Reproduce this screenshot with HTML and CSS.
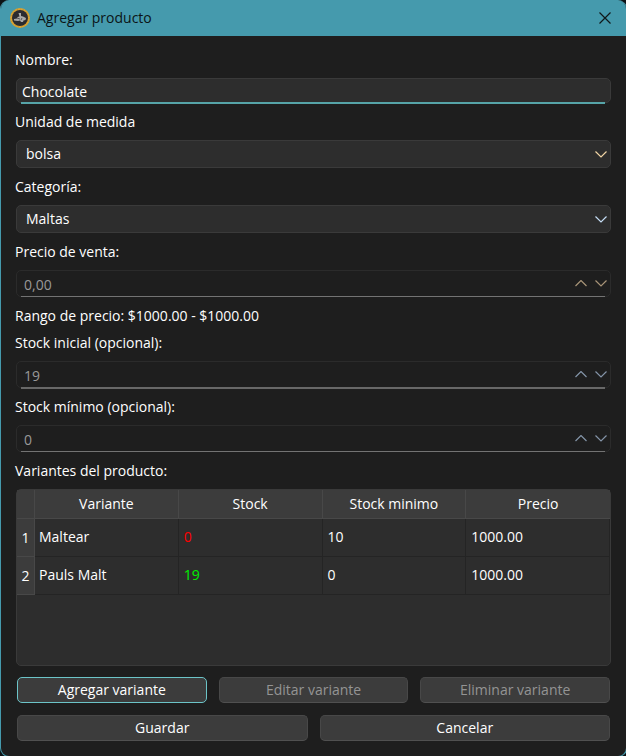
FILE: index.html
```html
<!DOCTYPE html>
<html lang="es">
<head>
<meta charset="utf-8">
<title>Agregar producto</title>
<link rel="stylesheet" href="styles.css">
</head>
<body>
<main class="window">
  <header class="titlebar">
    <svg class="logo" width="22" height="22" viewBox="0 0 22 22" aria-hidden="true">
      <circle cx="11" cy="11" r="10" fill="#dda52f"/>
      <circle cx="11" cy="11" r="9" fill="none" stroke="#b98a3a" stroke-width="1" stroke-dasharray="1 2"/>
      <circle cx="11" cy="11" r="8" fill="#2b2b30"/>
      <path d="M9.500 6h2.500v3l2 .5 3 1.500-.5 2-2 .5-.5 1.500h-2l-1-1.500-2 .5-4-.5v-1.500l3-.5.5-1.500 2-.5z" fill="#aaa9a6"/>
      <path d="M8 11l3 1M13 11l-1 2" stroke="#55555a" stroke-width="1"/>
    </svg>
    <h1 class="title">Agregar producto</h1>
    <button class="close" type="button" aria-label="Cerrar">
      <svg width="12" height="12" viewBox="0 0 12 12"><path d="M.5 .5l11 11M11.500 .5l-11 11" fill="none" stroke="#10181a" stroke-width="1.200"/></svg>
    </button>
  </header>
  <form class="form">
    <label class="label" for="nombre">Nombre:</label>
    <div class="field text focused"><input id="nombre" type="text" value="Chocolate"></div>

    <label class="label" for="unidad">Unidad de medida</label>
    <div class="field combo warm">
      <select id="unidad"><option>bolsa</option></select>
      <svg class="chevron" width="12" height="7" viewBox="0 0 12 7"><path d="M.5 .5L6 6 11.500 .5"/></svg>
    </div>

    <label class="label" for="categoria">Categoría:</label>
    <div class="field combo cool">
      <select id="categoria"><option>Maltas</option></select>
      <svg class="chevron" width="12" height="7" viewBox="0 0 12 7"><path d="M.5 .5L6 6 11.500 .5"/></svg>
    </div>

    <label class="label" for="precio">Precio de venta:</label>
    <div class="field spin warm">
      <input id="precio" type="text" value="0,00" disabled>
      <button class="step" type="button" aria-label="Aumentar" disabled><svg width="12" height="7" viewBox="0 0 12 7"><path d="M.5 6L6 .5 11.500 6"/></svg></button>
      <button class="step" type="button" aria-label="Disminuir" disabled><svg width="12" height="7" viewBox="0 0 12 7"><path d="M.5 .5L6 6 11.500 .5"/></svg></button>
    </div>

    <div class="stack">
      <p class="label">Rango de precio: $1000.00 - $1000.00</p>
      <label class="label" for="stock">Stock inicial (opcional):</label>
    </div>
    <div class="field spin strong cool">
      <input id="stock" type="text" value="19" disabled>
      <button class="step" type="button" aria-label="Aumentar" disabled><svg width="12" height="7" viewBox="0 0 12 7"><path d="M.5 6L6 .5 11.500 6"/></svg></button>
      <button class="step" type="button" aria-label="Disminuir" disabled><svg width="12" height="7" viewBox="0 0 12 7"><path d="M.5 .5L6 6 11.500 .5"/></svg></button>
    </div>

    <label class="label" for="minimo">Stock mínimo (opcional):</label>
    <div class="field spin cool">
      <input id="minimo" type="text" value="0" disabled>
      <button class="step" type="button" aria-label="Aumentar" disabled><svg width="12" height="7" viewBox="0 0 12 7"><path d="M.5 6L6 .5 11.500 6"/></svg></button>
      <button class="step" type="button" aria-label="Disminuir" disabled><svg width="12" height="7" viewBox="0 0 12 7"><path d="M.5 .5L6 6 11.500 .5"/></svg></button>
    </div>

    <p class="label" id="variantes">Variantes del producto:</p>
    <div class="grid">
      <table aria-labelledby="variantes">
        <colgroup><col class="index"><col><col><col><col></colgroup>
        <thead>
          <tr><td class="corner"></td><th scope="col">Variante</th><th scope="col">Stock</th><th scope="col">Stock minimo</th><th scope="col">Precio</th></tr>
        </thead>
        <tbody>
          <tr><th scope="row">1</th><td>Maltear</td><td class="empty">0</td><td>10</td><td>1000.00</td></tr>
          <tr><th scope="row">2</th><td>Pauls Malt</td><td class="available">19</td><td>0</td><td>1000.00</td></tr>
        </tbody>
      </table>
    </div>

    <div class="actions">
      <div class="row">
        <button class="btn primary" type="button">Agregar variante</button>
        <button class="btn" type="button" disabled>Editar variante</button>
        <button class="btn" type="button" disabled>Eliminar variante</button>
      </div>
      <div class="row">
        <button class="btn" type="submit">Guardar</button>
        <button class="btn" type="button">Cancelar</button>
      </div>
    </div>
  </form>
</main>
</body>
</html>
```
FILE: styles.css
```css
* { box-sizing: border-box; }

html, body { height: 100%; }

body {
  margin: 0;
  overflow: hidden;
  background: #0d1214;
  color: #fff;
  font: 14px/20px "Open Sans", "Noto Sans", sans-serif;
}

input, select, button { font: inherit; color: inherit; }

/* The right and bottom frame edges run just past the viewport. */
.window {
  display: flex;
  flex-direction: column;
  width: calc(100% + 1px);
  min-height: calc(100% + 1px);
  border: 1px solid #459aad;
  border-top: 0;
  border-radius: 9px;
  background: #1e1e1e;
  overflow: hidden;
}

.titlebar {
  display: flex;
  align-items: center;
  gap: 6px;
  height: 36px;
  padding: 0 15px 0 8px;
  background: #459aad;
  color: #0b1416;
}

.title { flex: 1; margin: 0; font-size: 14px; font-weight: 400; }

.close { display: flex; padding: 0; border: 0; background: none; }

.form {
  flex: 1;
  display: flex;
  flex-direction: column;
  gap: 7px;
  padding: 12px 15px 15px;
}

.label { margin: 0 -1px; line-height: 23px; }

.stack { display: flex; flex-direction: column; gap: 4px; }

.field {
  position: relative;
  display: flex;
  align-items: center;
  height: 27px;
  border: 1px solid #3a3a3a;
  border-radius: 5px;
  background: #2d2d2d;
}

.field input {
  flex: 1;
  min-width: 0;
  height: 100%;
  padding: 1px 7px 0;
  border: 0;
  outline: 0;
  background: none;
}

.text { height: 25px; }
.text input { padding: 1px 5px 0; }

.focused::after, .spin::after {
  content: "";
  position: absolute;
  left: 4px;
  right: 5px;
  bottom: -1px;
  height: 1px;
  background: #737373;
}

.focused::after { bottom: -2px; height: 2px; background: #56a4a8; }
.strong::after { bottom: -2px; height: 2px; background: #686868; }

.combo { height: 28px; }

.combo select {
  width: 100%;
  height: 100%;
  padding: 0 28px 0 9px;
  border: 0;
  outline: 0;
  appearance: none;
  background: none;
}

.chevron { position: absolute; right: 3px; pointer-events: none; }

.field path { fill: none; stroke-width: 1.2; }
.warm path { stroke: #f0d4a4; }
.cool path { stroke: #c4dcf4; }

.spin { padding-right: 3px; border-color: #2b2b2b; background: #1e1e1e; color: #999; gap: 8px; }
.spin.warm path { stroke: #a89478; }
.spin.cool path { stroke: #8494a8; }

.step { display: flex; padding: 0; border: 0; background: none; }

.grid {
  flex: 1;
  border: 1px solid #3a3a3a;
  border-radius: 5px;
  background: #2d2d2d;
}

table {
  width: 100%;
  border-spacing: 0;
  table-layout: fixed;
}

.index { width: 18px; }

th, td { height: 38px; padding: 0; font-weight: 400; }

thead th, .corner {
  height: 29px;
  border-right: 1px solid #484848;
  border-bottom: 1px solid #484848;
  background: #3c3c3c;
}

thead th:last-child { border-right: 0; }

tbody th {
  border-right: 1px solid #484848;
  border-bottom: 1px solid #484848;
  background: #3c3c3c;
}

tbody td {
  padding: 0 0 2px 4px;
  border-right: 1px solid #242424;
  border-bottom: 1px solid #242424;
}

tbody td + td { padding-left: 5px; }

.empty { color: #f00; }
.available { color: #00f000; }

.actions {
  display: flex;
  flex-direction: column;
  gap: 12px;
  padding: 4px 1px 0;
}

.row { display: flex; gap: 12px; }

.btn {
  flex: 1 1 0;
  height: 26px;
  padding: 0;
  border: 1px solid #484848;
  border-bottom-color: #505050;
  border-radius: 5px;
  background: #3c3c3c;
  line-height: 24px;
}

.btn:disabled { color: #949494; }
.primary { border-color: #6cc4c8; }
```
